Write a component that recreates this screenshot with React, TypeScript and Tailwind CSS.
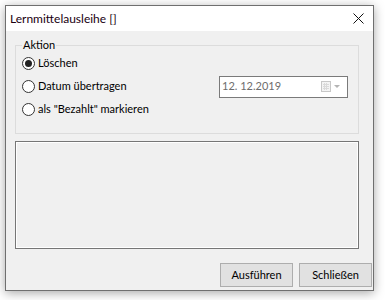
import React from 'react';

const Radio: React.FC<{ checked?: boolean; label: string }> = ({ checked, label }) => (
  <label className="flex items-center gap-[3px]">
    <span className="flex h-[13px] w-[13px] items-center justify-center rounded-full border border-[#333] bg-white">
      {checked && <span className="h-[7px] w-[7px] rounded-full bg-[#222]" />}
    </span>
    <span>{label}</span>
  </label>
);

const App: React.FC = () => {
  return (
    <div className="h-[300px] w-[385px] overflow-hidden bg-white pl-[5px] pt-[5px] font-['Lato','Noto_Sans',sans-serif] text-[11px] text-black">
      <div className="flex h-[286px] w-[369px] flex-col border border-[#6f6f6f] bg-[#f0f0f0] shadow-[0_2px_10px_rgba(0,0,0,0.35)]">
        {/* Titelleiste */}
        <div className="flex h-[25px] items-center justify-between bg-white pl-[4px] pr-[8px]">
          <span className="text-[12px] text-[#1a0010]">Lernmittelausleihe []</span>
          <svg width="11" height="11" viewBox="0 0 11 11" className="mr-[1px]">
            <path d="M0.5 0.5 L10.5 10.5 M10.5 0.5 L0.5 10.5" stroke="#111" strokeWidth="1" />
          </svg>
        </div>

        <div className="flex flex-1 flex-col pl-[9px] pr-[1px]">
          {/* Aktion */}
          <fieldset className="mt-[7px] h-[96px] w-[344px] border border-[#dcdcdc] px-[6px]">
            <legend className="px-[1px] leading-[14px]">Aktion</legend>
            <div className="flex flex-col">
              <div className="flex h-[23px] items-center">
                <Radio checked label="Löschen" />
              </div>
              <div className="flex h-[23px] items-center">
                <Radio label="Datum übertragen" />
                <div className="ml-auto mr-[4px] flex h-[22px] w-[129px] items-center border border-[#7a7a7a] bg-white pl-[2px] pr-[6px] text-[#6d6d6d]">
                  <span className="flex-1">12. 12.2019</span>
                  <svg width="20" height="11" viewBox="0 0 20 11">
                    <rect x="0.5" y="0.5" width="9" height="10" fill="#f4f4f4" stroke="#c8c8c8" />
                    <path d="M2 3.5 H8 M2 5.5 H8 M2 7.5 H8 M3.5 2 V9 M5.5 2 V9" stroke="#dadada" strokeWidth="1" />
                    <path d="M13 4 L19 4 L16 7 Z" fill="#b4b4b4" />
                  </svg>
                </div>
              </div>
              <div className="flex h-[23px] items-center">
                <Radio label={'als "Bezahlt" markieren'} />
              </div>
            </div>
          </fieldset>

          {/* Ausgabe */}
          <div className="mt-[7px] flex h-[108px] w-[344px] border border-[#767676]">
            <div className="flex-1 border border-white" />
          </div>

          {/* Buttons */}
          <div className="mt-[14px] flex justify-end gap-[6px]">
            <button className="h-[24px] w-[73px] border border-[#adadad] bg-[#e1e1e1]">Ausführen</button>
            <button className="h-[24px] w-[73px] border border-[#adadad] bg-[#e1e1e1]">Schließen</button>
          </div>
        </div>
      </div>
    </div>
  );
};

export default App;
